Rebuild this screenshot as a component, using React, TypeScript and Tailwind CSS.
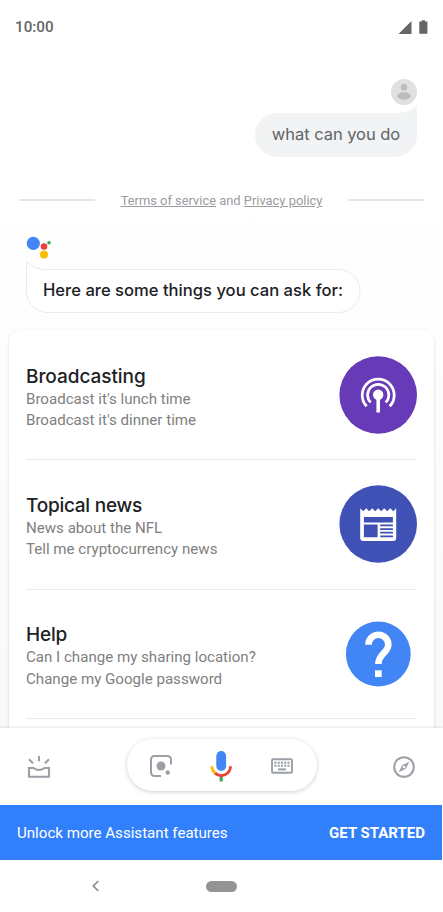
const topics = [
  { title: "Broadcasting", titleClass: "tracking-[-0.05px]", lines: ["Broadcast it's lunch time", "Broadcast it's dinner time"], icon: <BroadcastIcon /> },
  { title: "Topical news", titleClass: "tracking-[-0.25px]", lines: ["News about the NFL", "Tell me cryptocurrency news"], icon: <NewsIcon /> },
  { title: "Help", titleClass: "tracking-[-0.2px]", lines: ["Can I change my sharing location?", "Change my Google password"], icon: <HelpIcon /> },
]

function BroadcastIcon() {
  return (
    <svg width="78" height="78" viewBox="0 0 78 78" fill="none">
      <circle cx="39.2" cy="39" r="38.8" fill="#673ab7" />
      <path d="M27.7 50.2A16 16 0 1 1 50.7 50.2" stroke="#fff" strokeWidth="2.8" />
      <path d="M31.7 46.4A10.6 10.6 0 1 1 46.7 46.4" stroke="#fff" strokeWidth="2.7" />
      <circle cx="39.2" cy="38.8" r="5.2" fill="#fff" />
      <path d="M39.2 39v17.5" stroke="#fff" strokeWidth="3.6" />
    </svg>
  )
}

function NewsIcon() {
  return (
    <svg width="78" height="78" viewBox="0 0 78 78">
      <circle cx="39.2" cy="39" r="38.8" fill="#3f51b5" />
      <path d="M21.200 23.2l3 3 3-3 3 3 3-3 3 3 3-3 3 3 3-3 3 3 3-3 3 3 3-3V53a3 3 0 0 1-3 3h-30a3 3 0 0 1-3-3z" fill="#fff" />
      <path d="M24.9 32h29v5.4h-29zM24.9 39.5h13.700v12.800h-13.700zM41.200 39.5h12.700v1.800h-12.700zM41.200 43.2h12.700v1.800h-12.700zM41.200 46.8h12.700v1.800h-12.700zM41.200 50.5h12.700v1.800h-12.700z" fill="#3f51b5" />
    </svg>
  )
}

function HelpIcon() {
  return (
    <svg width="78" height="78" viewBox="0 0 78 78">
      <circle cx="39.3" cy="39" r="32.4" fill="#4285f4" />
      <path d="M29.5 29.7a9.9 9.9 0 0 1 19.8 0c0 8-9.900 9-9.900 19.300" fill="none" stroke="#fff" strokeWidth="6.6" />
      <path d="M36 55.3h6.700v6.700h-6.700z" fill="#fff" />
    </svg>
  )
}

function StatusBar() {
  return (
    <div className="flex h-[53px] items-center justify-between pl-[15px] pr-[15px] pt-px">
      <span className="pt-px text-[15.2px] font-medium text-[#666]">10:00</span>
      <div className="flex items-center gap-[7px] text-[#666]">
        <svg width="14" height="15" viewBox="0 0 14 15" fill="currentColor">
          <path d="M13.5 1v13H.5z" />
        </svg>
        <svg width="9" height="15" viewBox="0 0 9 15" fill="currentColor">
          <path d="M2.7.2h3.4v1.3h2.3v12.3H.3V1.5h2.4z" />
        </svg>
      </div>
    </div>
  )
}

function Avatar() {
  return (
    <svg className="block" width="26" height="26" viewBox="0 0 26 26">
      <circle cx="13" cy="13" r="13" fill="#e0e0e0" />
      <circle cx="13" cy="8.3" r="3.3" fill="#bdbdbd" />
      <ellipse cx="13" cy="17" rx="7" ry="3.7" fill="#bdbdbd" />
    </svg>
  )
}

function AssistantLogo() {
  return (
    <svg className="block" width="26" height="24" viewBox="0 0 26 24">
      <circle cx="7.3" cy="8.3" r="6.6" fill="#4285f4" />
      <circle cx="18" cy="11.5" r="3.3" fill="#ea4335" />
      <circle cx="18" cy="19.5" r="4" fill="#fbbc04" />
      <circle cx="23" cy="7.8" r="1.8" fill="#34a853" />
    </svg>
  )
}

function MicIcon() {
  return (
    <svg width="22" height="32" viewBox="0 0 22 32" fill="none">
      <rect x="6.3" y="1" width="9.8" height="20" rx="4.9" fill="#4285f4" />
      <path d="M11.2 26v5.5" stroke="#34a853" strokeWidth="3" />
      <path d="M1.9 16.2A9.3 9.3 0 0 0 5 23.1" stroke="#fbbc04" strokeWidth="2.8" />
      <path d="M5 23.1A9.3 9.3 0 0 0 20.5 16.2" stroke="#ea4335" strokeWidth="2.8" />
    </svg>
  )
}

function TrayIcon() {
  return (
    <svg width="24" height="24" viewBox="0 0 24 24" fill="none" stroke="currentColor" strokeWidth="2.1">
      <path d="M2 13h4.5q5.5 4 11 0H22v8.8H2zM12 1v5.2M2 4.3l4 4M22 4.3l-4 4" />
    </svg>
  )
}

function LensIcon() {
  return (
    <svg width="24" height="24" viewBox="0 0 24 24" fill="none" stroke="currentColor" strokeWidth="2">
      <path d="M12 22H5.5A3.5 3.5 0 0 1 2 18.5V5.5A3.5 3.5 0 0 1 5.5 2h13A3.5 3.5 0 0 1 22 5.5V10.5" />
      <circle cx="12" cy="12" r="4.5" fill="currentColor" stroke="none" />
      <circle cx="18.7" cy="18.5" r="2.2" fill="currentColor" stroke="none" />
    </svg>
  )
}

function KeyboardIcon() {
  return (
    <svg width="24" height="24" viewBox="0 0 24 24" fill="none" stroke="currentColor">
      <rect x="2" y="5.3" width="20" height="13.4" rx="1" strokeWidth="1.9" />
      <path d="M4.4 8.7h15.2M4.4 11.7h15.2" strokeWidth="2.1" strokeDasharray="2.1 1.175" />
      <path d="M8 15.4h8" strokeWidth="2" />
    </svg>
  )
}

function CompassIcon() {
  return (
    <svg width="24" height="24" viewBox="0 0 24 24" fill="none">
      <circle cx="12" cy="12" r="9.8" stroke="currentColor" strokeWidth="2" />
      <path d="M17.3 6.7l-3.5 7.1-7.1 3.5 3.5-7.1z" fill="currentColor" />
      <circle cx="12" cy="12" r="1.3" fill="#fff" />
    </svg>
  )
}

export default function App() {
  return (
    <div className="flex h-[912px] w-[443px] flex-col overflow-hidden bg-white font-['Roboto',sans-serif]">
      <div className="h-[728px] shrink-0 overflow-hidden bg-linear-to-b from-white from-25% to-[#f8f9fa]">
        <StatusBar />

        {/* User query */}
        <div className="mt-[26px] flex flex-col items-end pr-[26px]">
          <Avatar />
          <div className="relative mt-[8px] flex h-[44px] w-[162px] items-center justify-center rounded-[22px] bg-[#f1f3f4]">
            <svg className="absolute -top-[8px] right-0" width="28" height="30" viewBox="0 0 28 30">
              <path d="M0 8h9Q20 8 28 0v30z" fill="#f1f3f4" />
            </svg>
            <span className="relative -top-px whitespace-nowrap font-['Inter',sans-serif] text-[16.5px] tracking-[-0.05px] text-[#5f6368]">what can you do</span>
          </div>
        </div>

        {/* Terms */}
        <div className="mt-[33px] flex h-5 items-center justify-between pl-[19px] pr-[19px]">
          <div className="h-[2px] w-[76px] bg-[#e4e5e6]" />
          <p className="relative top-px whitespace-nowrap text-[12.9px] text-[#9a9c9f]">
            <span className="underline">Terms of service</span> and <span className="underline">Privacy policy</span>
          </p>
          <div className="h-[2px] w-[76px] bg-[#e4e5e6]" />
        </div>

        {/* Assistant answer */}
        <div className="mt-[25px] pl-[26px]">
          <AssistantLogo />
          <div className="relative mt-[2px] flex h-[52px] w-[335px] items-center pl-[17px] pt-[6px]">
            <svg className="absolute inset-0" width="335" height="52" viewBox="0 0 335 52">
              <path d="M.5.8Q8 8.5 20 8.5H312.5a21.5 21.5 0 0 1 0 43H22A21.5 21.5 0 0 1 .5 30z" fill="#fff" stroke="#e8eaed" />
            </svg>
            <span className="relative whitespace-nowrap font-['Inter',sans-serif] text-[16.6px] font-medium text-[#202124]">Here are some things you can ask for:</span>
          </div>
        </div>

        {/* Topics card */}
        <div className="ml-[9px] mt-[17px] w-[425px] rounded-[12px] bg-white px-[17px] pt-px shadow-[0_1px_3px_rgba(60,64,67,0.2)]">
          {topics.map((topic) => (
            <div key={topic.title} className="flex h-[129.3px] items-center justify-between border-b border-[#ebebeb]">
              <div className="pt-[6px]">
                <h2 className={`font-['Inter',sans-serif] text-[19px] font-medium leading-[24px] text-[#202124] ${topic.titleClass}`}>{topic.title}</h2>
                {topic.lines.map((line) => (
                  <p key={line} className="text-[15.1px] leading-[21.5px] text-[#808080]">{line}</p>
                ))}
              </div>
              {topic.icon}
            </div>
          ))}
          <div className="h-[60px]" />
        </div>
      </div>

      {/* Input bar */}
      <div className="relative flex h-[77px] shrink-0 items-center justify-between bg-white pl-[27px] pr-[27px] text-[#9aa0a6] shadow-[0_-1px_2px_rgba(60,64,67,0.13)]">
        <TrayIcon />
        <div className="mb-[3px] flex h-[52px] w-[190px] items-center justify-between rounded-full bg-white pl-[22px] pr-[23px] pt-[2px] shadow-[0_1px_4px_rgba(60,64,67,0.25)]">
          <LensIcon />
          <MicIcon />
          <KeyboardIcon />
        </div>
        <CompassIcon />
      </div>

      {/* Promo banner */}
      <div className="flex h-[55px] w-[442px] shrink-0 items-center justify-between bg-[#327ffb] pl-[17px] pr-[17px] pt-[2px] text-[15.1px] text-white">
        <span>Unlock more Assistant features</span>
        <span className="text-[15px] font-bold">GET STARTED</span>
      </div>

      {/* Navigation */}
      <div className="flex h-[52px] items-center pl-[91px]">
        <svg width="9" height="12" viewBox="0 0 9 12" fill="none" stroke="#8a8a8a" strokeWidth="1.7">
          <path d="M7.3 1L2.3 6l5 5" />
        </svg>
        <div className="ml-[106px] h-[11px] w-[31px] rounded-full bg-[#949494]" />
      </div>
    </div>
  )
}
